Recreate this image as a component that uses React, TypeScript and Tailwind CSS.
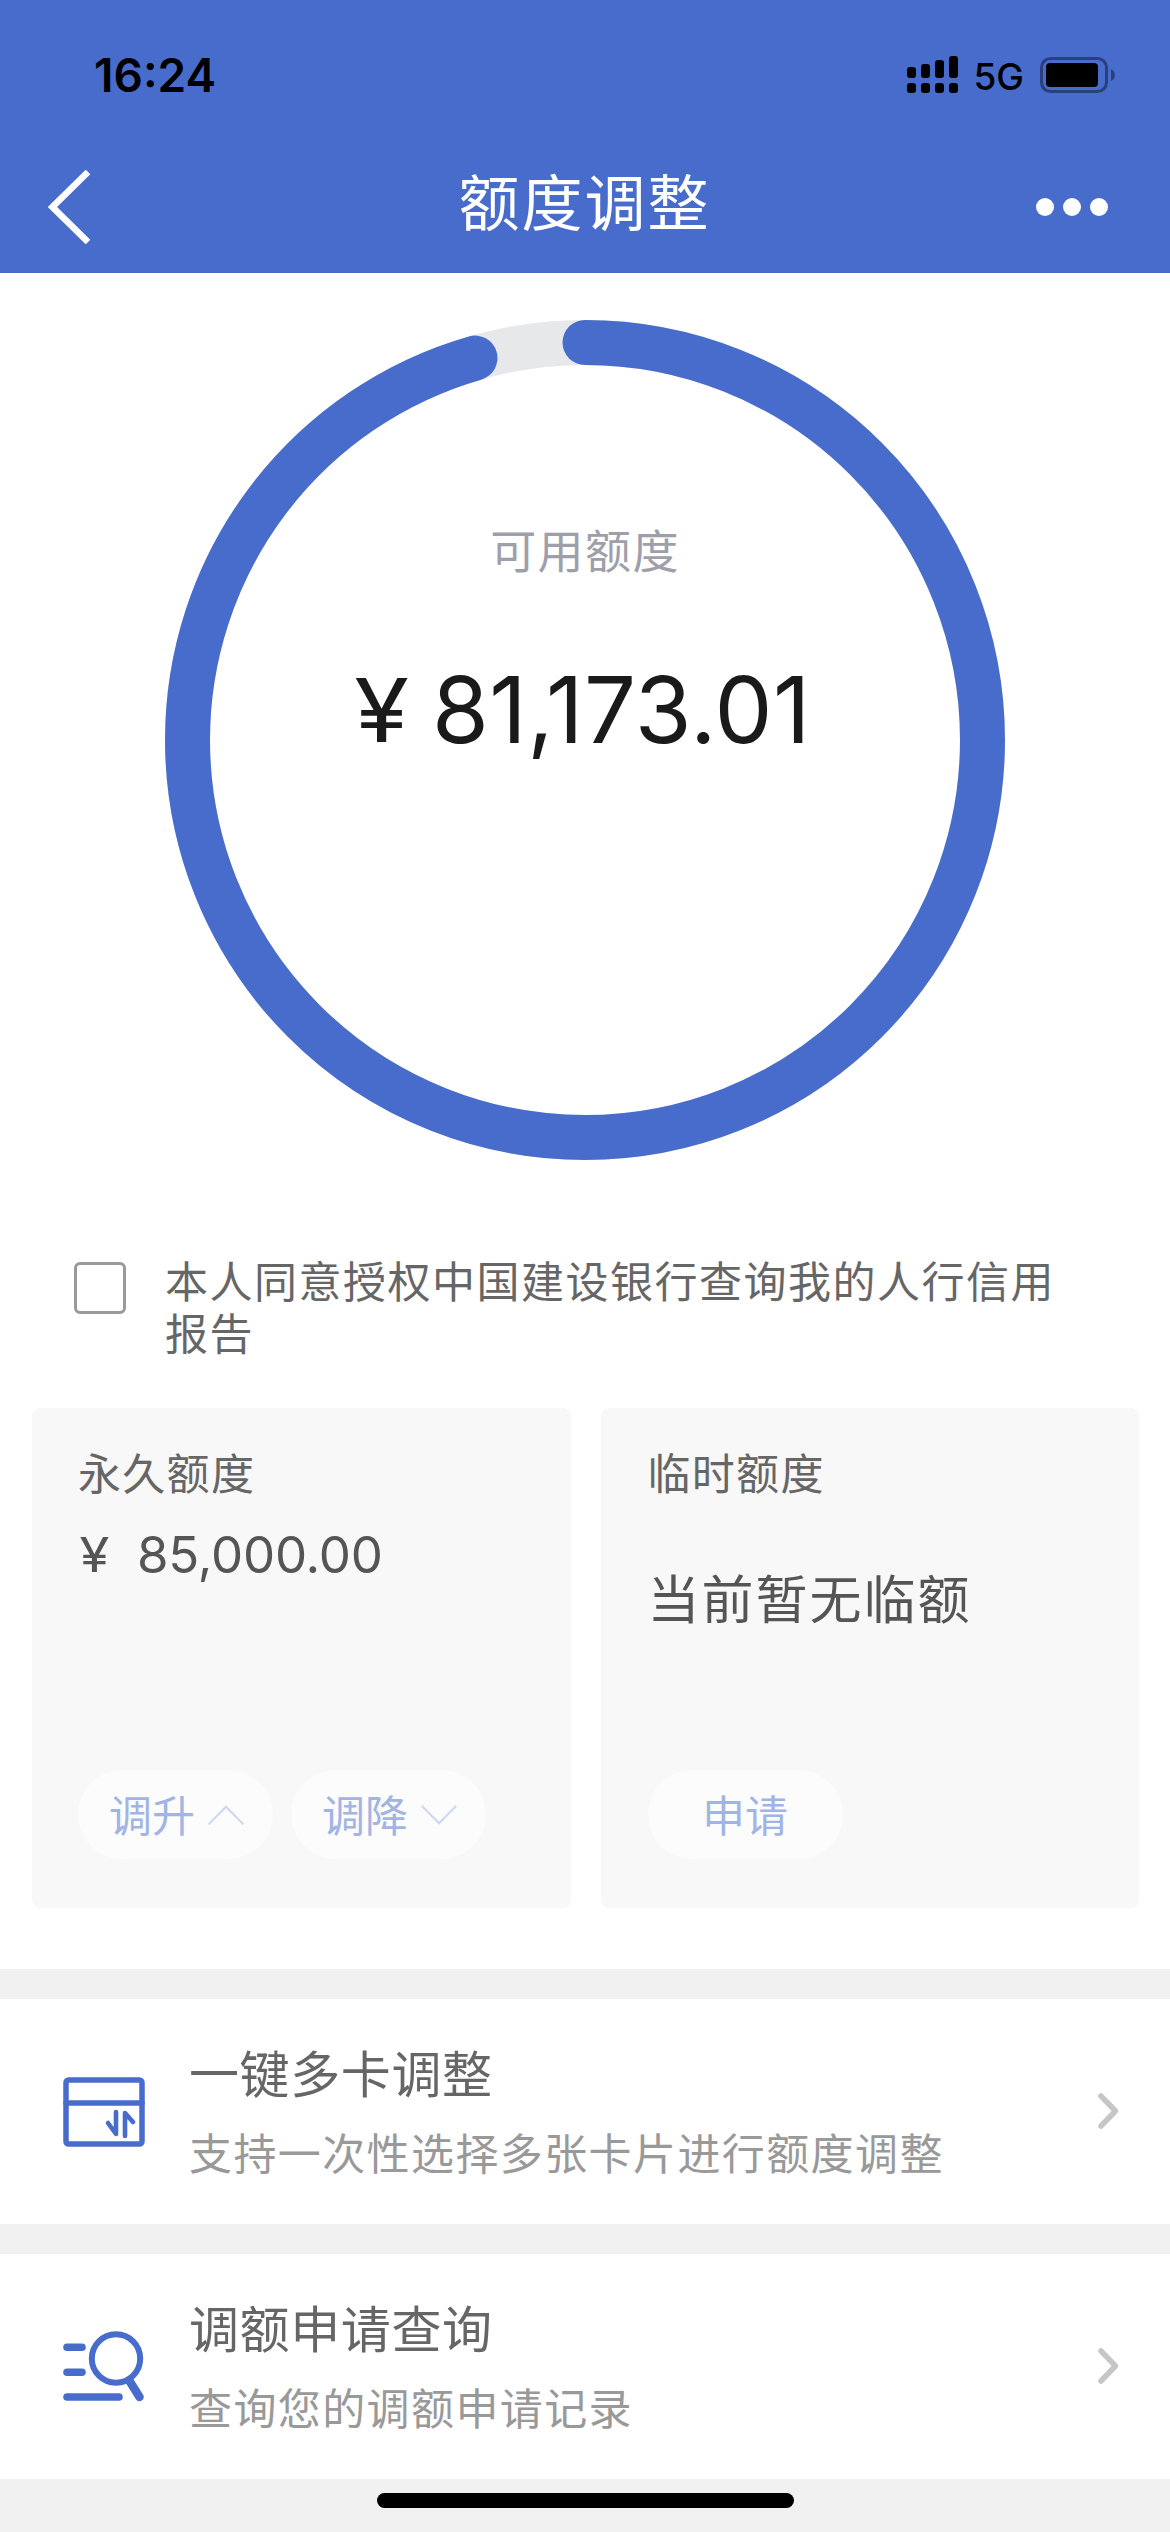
import type { ReactNode } from "react";

const AVAILABLE = 81173.01;
const TOTAL = 85000;

function SignalIcon() {
  const tops = [11, 8, 4, 0];
  return (
    <svg width="51" height="37" viewBox="0 0 51 37" fill="#000">
      {tops.map((top, i) => (
        <g key={i}>
          <rect x={i * 14} y={top} width="9" height={22 - top} rx="3" />
          <rect x={i * 14} y="27" width="9" height="10" rx="3" />
        </g>
      ))}
    </svg>
  );
}

function BatteryIcon() {
  return (
    <svg width="76" height="36" viewBox="0 0 76 36">
      <rect x="1.5" y="1.5" width="65" height="33" rx="9" fill="none" stroke="#000" strokeOpacity="0.4" strokeWidth="3" />
      <rect x="6" y="6" width="52" height="24" rx="4" fill="#000" />
      <path d="M71 12a6.6 6.6 0 0 1 0 12z" fill="#000" fillOpacity="0.4" />
    </svg>
  );
}

function LimitRing() {
  const r = 397.5;
  const c = 2 * Math.PI * r;
  return (
    <svg className="block" width="840" height="840" viewBox="0 0 840 840" fill="none">
      <circle cx="420" cy="420" r={r} stroke="#e6e8ea" strokeWidth="45" />
      <circle
        cx="420"
        cy="420"
        r={r}
        stroke="#486ccb"
        strokeWidth="45"
        strokeLinecap="round"
        strokeDasharray={`${(c * AVAILABLE) / TOTAL} ${c}`}
        transform="rotate(-90 420 420)"
      />
    </svg>
  );
}

function PillButton({ children, direction }: { children: ReactNode; direction?: "up" | "down" }) {
  return (
    <button
      className={
        "flex h-[89px] w-[195px] items-center rounded-full bg-[#fcfcfc] pb-1 text-[43px] leading-[60px] text-[#a1b4e3] " +
        (direction ? "pl-[31px]" : "justify-center")
      }
    >
      <span>{children}</span>
      {direction && (
        <svg className="mt-1 ml-[13px]" width="36" height="20" viewBox="0 0 36 20" fill="none" stroke="#cdd7f0" strokeWidth="2">
          <path d={direction === "up" ? "M0.7 19.3 18 1.7 35.3 19.3" : "M0.7 0.7 18 18.3 35.3 0.7"} />
        </svg>
      )}
    </button>
  );
}

function CardSwapIcon() {
  return (
    <svg width="82" height="70" viewBox="0 0 82 70" fill="none" stroke="#486ccb" strokeWidth="5.5" strokeLinecap="round" strokeLinejoin="round">
      <rect x="3" y="3" width="76" height="64" rx="2.5" />
      <path d="M3 26h76" />
      <path d="M53 35v22L45 46" strokeWidth="4.6" />
      <path d="M62 59V36l8 9" strokeWidth="4.6" />
    </svg>
  );
}

function SearchListIcon() {
  return (
    <svg width="82" height="71" viewBox="0 0 82 71" fill="none" stroke="#486ccb" strokeLinecap="round">
      <path d="M4 16.3h15M4 41.3h15M4 66h52" strokeWidth="7.6" />
      <circle cx="53" cy="27.5" r="24.2" strokeWidth="6" />
      <path d="M66.5 50 76.5 66" strokeWidth="8.5" />
    </svg>
  );
}

function LinkRow({ icon, title, detail }: { icon: ReactNode; title: string; detail: string }) {
  return (
    <a className="flex h-[225px] items-center bg-white pr-[50px] pl-[63px]">
      <span className="w-[82px] shrink-0">{icon}</span>
      <span className="mb-[4px] ml-[44px] flex grow flex-col gap-[13px]">
        <span className="text-[50px] leading-[70px] tracking-[0.6px] text-[#666]">{title}</span>
        <span className="text-[43px] leading-[64px] tracking-[1.4px] text-[#999]">{detail}</span>
      </span>
      <svg className="-mt-[2px]" width="23" height="38" viewBox="0 0 23 38" fill="none" stroke="#c6c6c6" strokeWidth="5.5" strokeLinecap="round" strokeLinejoin="round">
        <path d="M4 4 18.5 19 4 34" />
      </svg>
    </a>
  );
}

export default function App() {
  return (
    <div className="flex h-[2532px] w-[1170px] flex-col overflow-hidden bg-white font-['Noto_Sans_CJK_SC',sans-serif]">
      <header className="h-[273px] shrink-0 bg-[#486ccb]">
        <div className="flex h-[149px] items-center justify-between pr-[54px] pl-[94px] font-['Inter',sans-serif] text-black">
          <span className="text-[46px] leading-none font-semibold">16:24</span>
          <div className="flex items-center">
            <SignalIcon />
            <span className="mt-[3px] mr-[16px] ml-[15px] text-[37px] leading-none font-medium">5G</span>
            <BatteryIcon />
          </div>
        </div>
        <div className="flex h-[116px] items-center justify-between pr-[62px] pl-[48px]">
          <svg width="60" height="74" viewBox="0 0 60 74" fill="none" stroke="#fff" strokeWidth="6.5">
            <path d="M40 2 4.5 37 40 72" />
          </svg>
          <h1 className="-mt-[15px] pl-[25px] text-[61px] leading-[80px] tracking-[2px] text-white">额度调整</h1>
          <div className="flex gap-[9px]">
            <i className="size-[18px] rounded-full bg-white" />
            <i className="size-[18px] rounded-full bg-white" />
            <i className="size-[18px] rounded-full bg-white" />
          </div>
        </div>
      </header>

      <main className="flex flex-col">
        <section className="mt-[47px] grid justify-center">
          <div className="col-start-1 row-start-1">
            <LimitRing />
          </div>
          <div className="col-start-1 row-start-1 flex flex-col items-center pt-[198px]">
            <p className="text-[46px] leading-[60px] tracking-[1.4px] text-[#9f9fab]">可用额度</p>
            <p className="mt-[77px] ml-[190px] flex items-center gap-[24px] self-start font-['Inter',sans-serif] text-[92px] leading-[110px] text-[#1a1a1a]">
              <span className="flex w-[53px] scale-x-[1.13] justify-center text-[88px]">¥</span>
              <span className="tracking-[0.4px]">81,173.01</span>
            </p>
          </div>
        </section>

        <label className="mt-[93px] flex pl-[74px]">
          <span className="mt-[9px] size-[52px] shrink-0 rounded-[6px] border-[3px] border-[#999]" />
          <span className="ml-[39px] w-[910px] text-[43px] leading-[52px] tracking-[1.5px] text-[#666]">
            本人同意授权中国建设银行查询我的人行信用报告
          </span>
        </label>

        <section className="mt-[51px] grid grid-cols-2 gap-[30px] pr-[31px] pl-[32px]">
          <article className="flex h-[500px] flex-col rounded-[8px] bg-[#f8f8f8] pl-[46px]">
            <h2 className="mt-[33px] text-[43px] leading-[60px] tracking-[1.3px] text-[#666]">永久额度</h2>
            <p className="mt-[24px] ml-[2px] flex items-center gap-[28px] font-['Inter',sans-serif] text-[51px] leading-[60px] text-[#555]">
              <span className="flex w-[29px] scale-x-[1.13] justify-center text-[48px]">¥</span>
              <span className="tracking-[-0.2px]">85,000.00</span>
            </p>
            <div className="mt-auto mb-[49px] flex gap-[18px]">
              <PillButton direction="up">调升</PillButton>
              <PillButton direction="down">调降</PillButton>
            </div>
          </article>
          <article className="flex h-[500px] flex-col rounded-[8px] bg-[#f8f8f8] pl-[47px]">
            <h2 className="mt-[33px] text-[43px] leading-[60px] tracking-[1.3px] text-[#666]">临时额度</h2>
            <p className="mt-[61px] text-[52px] leading-[70px] tracking-[2px] text-[#555]">当前暂无临额</p>
            <div className="mt-auto mb-[49px] flex">
              <PillButton>申请</PillButton>
            </div>
          </article>
        </section>

        <nav className="mt-[61px] flex flex-col gap-[30px] bg-[#f1f1f1] pt-[30px]">
          <LinkRow icon={<CardSwapIcon />} title="一键多卡调整" detail="支持一次性选择多张卡片进行额度调整" />
          <LinkRow icon={<SearchListIcon />} title="调额申请查询" detail="查询您的调额申请记录" />
        </nav>
      </main>

      <footer className="flex grow justify-center bg-[#f1f1f1] pt-[14px]">
        <div className="h-[15px] w-[417px] rounded-full bg-black" />
      </footer>
    </div>
  );
}
